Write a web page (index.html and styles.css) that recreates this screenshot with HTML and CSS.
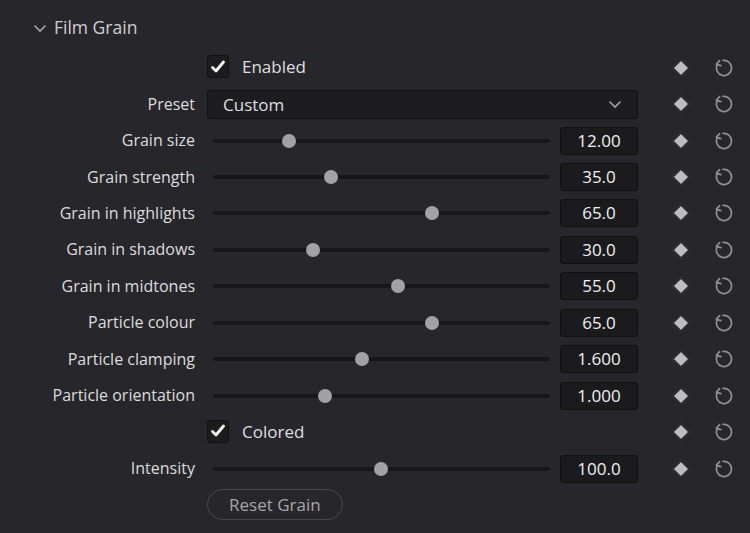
FILE: index.html
```html
<!DOCTYPE html>
<html lang="en">
<head>
    <meta charset="UTF-8">
    <meta name="viewport" content="width=device-width, initial-scale=1.0">
    <title>Film Grain</title>
    <link rel="stylesheet" href="styles.css">
</head>
<body>
    <div class="panel">
        <div class="panel-header">
            <svg class="caret" width="14" height="10" viewBox="0 0 14 10"><path d="M1.5 2.5 L7 8 L12.5 2.5" /></svg>
            <span>Film Grain</span>
        </div>

        <div class="grid" id="grid"></div>
    </div>

    <script>
        // slider rows: label, value shown, knob position in percent
        const sliders = [
            ['Grain size', '12.00', 22.6],
            ['Grain strength', '35.0', 35],
            ['Grain in highlights', '65.0', 65],
            ['Grain in shadows', '30.0', 29.7],
            ['Grain in midtones', '55.0', 55],
            ['Particle colour', '65.0', 65],
            ['Particle clamping', '1.600', 44.2],
            ['Particle orientation', '1.000', 33.2],
        ];

        const icons = `
            <div class="key"><span class="diamond"></span></div>
            <div class="undo"><svg width="24" height="24" viewBox="0 0 24 24">
                <path d="M11 4.4 A7.6 7.6 0 1 1 5 8.9" />
                <path d="M7.6 4.6 L4.3 8.4 L8.9 9.6" />
            </svg></div>`;

        const tick = `<span class="box"><svg width="16" height="14" viewBox="0 0 16 14"><path d="M2.5 7.5 L6 11 L13.5 2" /></svg></span>`;

        function sliderRow(name, value, pos) {
            return `
                <div class="label">${name}</div>
                <div class="control">
                    <div class="slider"><span class="knob" style="left: ${pos}%"></span></div>
                    <div class="number">${value}</div>
                </div>` + icons;
        }

        function checkRow(name) {
            return `
                <div class="label"></div>
                <div class="control"><label class="check">${tick}${name}</label></div>` + icons;
        }

        let html = checkRow('Enabled');

        html += `
            <div class="label">Preset</div>
            <div class="control">
                <div class="select">Custom
                    <svg width="14" height="10" viewBox="0 0 14 10"><path d="M1.5 2.5 L7 8 L12.5 2.5" /></svg>
                </div>
            </div>` + icons;

        sliders.forEach(s => html += sliderRow(...s));
        html += checkRow('Colored');
        html += sliderRow('Intensity', '100.0', 49.9);

        html += `
            <div class="label"></div>
            <div class="control"><button class="reset-btn">Reset Grain</button></div>
            <div></div><div></div>`;

        document.getElementById('grid').innerHTML = html;
    </script>
</body>
</html>
```

FILE: styles.css
```css
body {
    margin: 0;
    background: #27262b;
    font-family: 'Open Sans', 'Noto Sans', sans-serif;
    color: #dcdcdf;
    overflow: hidden;
}
.panel {
    padding-top: 9px;
}
.panel-header {
    display: flex;
    align-items: center;
    height: 36px;
    padding-left: 33px;
    font-size: 17.5px;
    color: #cfcfd2;
    margin-bottom: 4.5px;
}
.caret {
    margin-right: 7px;
    margin-top: 1px;
}
.caret path, .select path {
    fill: none;
    stroke: #a3a3a7;
    stroke-width: 1.6;
}
.grid {
    display: grid;
    grid-template-columns: 207px 431px 56px 44px;
    grid-auto-rows: 36.45px;
    align-items: center;
}
.label {
    text-align: right;
    padding-right: 12px;
    font-size: 16px;
    white-space: nowrap;
    margin-top: -1px;
}
.control {
    display: flex;
    align-items: center;
}
.check {
    display: flex;
    align-items: center;
    font-size: 17px;
    color: #dedee0;
    margin-top: -2px;
}
.box {
    width: 20px;
    height: 21px;
    margin-right: 13px;
    background: #1c1c1e;
    border: 1px solid #111113;
    border-radius: 3px;
    display: flex;
    align-items: center;
    justify-content: center;
}
.box path {
    fill: none;
    stroke: #fff;
    stroke-width: 2.8;
    stroke-linecap: round;
    stroke-linejoin: round;
}
.select {
    flex: 1;
    height: 27px;
    display: flex;
    align-items: center;
    justify-content: space-between;
    padding: 0 15px 0 15px;
    background: #1d1d1f;
    border: 1px solid #111113;
    border-radius: 3px;
    font-size: 17px;
    color: #dedee0;
}
.slider {
    position: relative;
    width: 337px;
    height: 4px;
    margin-left: 6px;
    margin-right: 10px;
    background: #17161a;
    border-radius: 2px;
}
.knob {
    position: absolute;
    top: 50%;
    width: 14px;
    height: 14px;
    margin: -7px 0 0 -7px;
    border-radius: 50%;
    background: #a2a2a5;
}
.number {
    width: 76px;
    height: 26px;
    line-height: 26px;
    text-align: center;
    background: #1b1b1d;
    border: 1px solid #0f0f10;
    border-radius: 3px;
    font-size: 17px;
    color: #f0f0f2;
}
.key, .undo {
    display: flex;
    justify-content: flex-end;
    align-items: center;
}
.key {
    padding-right: 7px;
}
.diamond {
    width: 10px;
    height: 10px;
    background: #bdbdc0;
    border: 1px solid #131315;
    transform: rotate(45deg);
}
.undo {
    padding-right: 2px;
}
.undo path {
    fill: none;
    stroke: #8f8f93;
    stroke-width: 1.7;
    stroke-linecap: round;
    stroke-linejoin: round;
}
.reset-btn {
    height: 31px;
    padding: 0 21px;
    background: transparent;
    border: 1px solid #48474d;
    border-radius: 16px;
    font-family: inherit;
    font-size: 17px;
    color: #a6a6a9;
}
```
